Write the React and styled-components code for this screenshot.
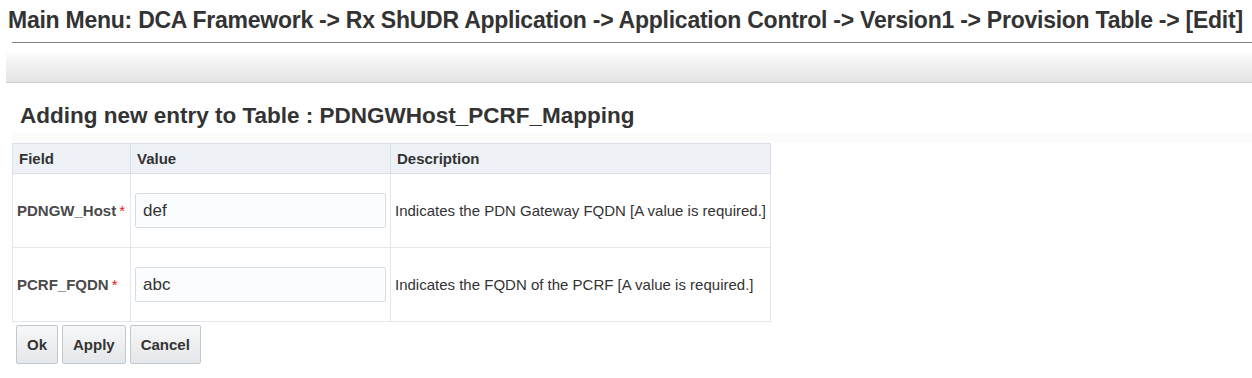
import React from "react";
import styled, { createGlobalStyle } from "styled-components";

const GlobalStyle = createGlobalStyle`
  body {
    margin: 0;
    background: #ffffff;
    font-family: "Liberation Sans", Arial, sans-serif;
  }
`;

const Page = styled.div`
  width: 1252px;
  height: 378px;
  overflow: hidden;
`;

const Breadcrumb = styled.h1`
  margin: 0;
  padding: 7px 0 0 8px;
  height: 35px;
  box-sizing: border-box;
  font-size: 23px;
  line-height: 26px;
  letter-spacing: -0.25px;
  font-weight: bold;
  color: #333333;
  white-space: nowrap;
`;

const Divider = styled.div`
  margin: 7px 0 0 12px;
  height: 1px;
  background: #808080;
`;

const Toolbar = styled.div`
  margin: 10px 0 0 6px;
  height: 29px;
  background: linear-gradient(#fbfbfb, #e3e3e3);
  border-bottom: 1px solid #cccccc;
`;

const Heading = styled.h2`
  margin: 0;
  padding: 20px 0 0 20px;
  height: 50px;
  box-sizing: border-box;
  font-size: 22.5px;
  line-height: 26px;
  font-weight: bold;
  color: #333333;
`;

const Content = styled.div`
  margin-left: 12px;
  padding-top: 10px;
  background: linear-gradient(#fbfbfb, #fbfbfb) no-repeat top / 100% 10px;
`;

const Table = styled.table`
  border-collapse: collapse;
  width: 759px;
  font-size: 15px;
  color: #333333;
  background: #ffffff;
`;

const HeadCell = styled.th`
  height: 29px;
  padding: 0 6px;
  text-align: left;
  font-weight: bold;
  background: #eef2f7;
  border: 1px solid #d9e0e8;
  width: ${(p) => p.$w || "auto"};
`;

const Cell = styled.td`
  height: 73px;
  padding: 0 4px;
  border: 1px solid #e4e8ec;
  border-top-color: ${(p) => (p.$first ? "#d9e0e8" : "#e4e8ec")};
  white-space: nowrap;
`;

const Label = styled.span`
  font-weight: bold;
  color: #4a4a4a;
`;

const Req = styled.span`
  color: #e02020;
  margin-left: 3px;
`;

const Input = styled.input`
  width: 251px;
  height: 35px;
  box-sizing: border-box;
  padding: 0 7px;
  border: 1px solid #d8dde3;
  border-radius: 2px;
  background: #fbfcfe;
  font-family: "Liberation Sans", Arial, sans-serif;
  font-size: 17px;
  color: #333333;
  outline: none;
`;

const Actions = styled.div`
  display: flex;
  gap: 4px;
  padding: 3px 0 0 4px;
`;

const Button = styled.button`
  height: 39px;
  padding: 0 ${(p) => p.$pad || 10}px;
  border: 1px solid #c3c8cd;
  border-radius: 2px;
  background: linear-gradient(#f6f7f8, #e4e7ea);
  font-family: "Liberation Sans", Arial, sans-serif;
  font-size: 15px;
  font-weight: bold;
  color: #333333;
`;

const rows = [
  { name: "PDNGW_Host", value: "def", desc: "Indicates the PDN Gateway FQDN [A value is required.]" },
  { name: "PCRF_FQDN", value: "abc", desc: "Indicates the FQDN of the PCRF [A value is required.]" },
];

const App = () => (
  <Page>
    <GlobalStyle />
    <Breadcrumb>
      Main Menu: DCA Framework -&gt; Rx ShUDR Application -&gt; Application Control -&gt; Version1 -&gt; Provision Table -&gt; [Edit]
    </Breadcrumb>
    <Divider />
    <Toolbar />
    <Heading>Adding new entry to Table : PDNGWHost_PCRF_Mapping</Heading>
    <Content>
      <Table>
        <thead>
          <tr>
            <HeadCell $w="105px">Field</HeadCell>
            <HeadCell $w="247px">Value</HeadCell>
            <HeadCell>Description</HeadCell>
          </tr>
        </thead>
        <tbody>
          {rows.map((r, i) => (
            <tr key={r.name}>
              <Cell $first={i === 0}>
                <Label>{r.name}</Label>
                <Req>*</Req>
              </Cell>
              <Cell $first={i === 0}>
                <Input defaultValue={r.value} />
              </Cell>
              <Cell $first={i === 0}>{r.desc}</Cell>
            </tr>
          ))}
        </tbody>
      </Table>
      <Actions>
        <Button $pad={10}>Ok</Button>
        <Button $pad={10}>Apply</Button>
        <Button $pad={10}>Cancel</Button>
      </Actions>
    </Content>
  </Page>
);

export default App;
